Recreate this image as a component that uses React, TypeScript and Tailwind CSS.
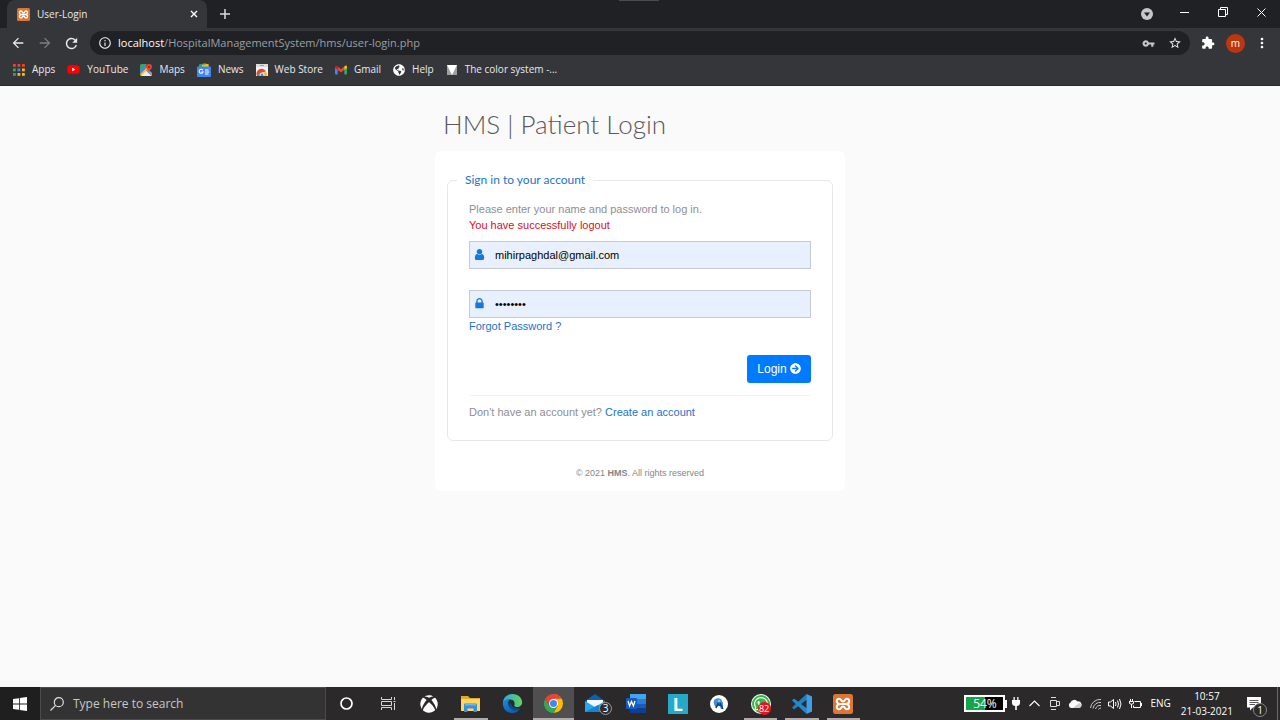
import { useState } from "react";
import type { ReactNode } from "react";
import { FaArrowCircleRight, FaGlobeAmericas, FaWhatsapp, FaXbox, FaYoutube } from "react-icons/fa";
import { MdExtension, MdInfoOutline, MdVpnKey, MdRefresh, MdStarBorder, MdArrowBack, MdArrowForward, MdMoreVert } from "react-icons/md";

const TILES = ["#ea4335", "#ea4335", "#ea4335", "#34a853", "#4285f4", "#fbbc05", "#34a853", "#fbbc05", "#fbbc05"];

function XamppIcon({ size }: { size: number }) {
  return (
    <svg width={size} height={size} viewBox="0 0 20 20">
      <rect width="20" height="20" rx="2.5" fill="#df7532" />
      <path
        d="M7.6 10H12.4M7.6 10C5 10 3.8 8.800 3.800 7.200C3.800 5.600 4.900 4.700 6.200 4.700C8.600 4.700 7.700 7.500 10 7.500C12.300 7.500 11.400 4.700 13.800 4.700C15.100 4.700 16.200 5.600 16.200 7.200C16.200 8.800 15 10 12.400 10C15 10 16.200 11.200 16.200 12.800C16.200 14.400 15.100 15.300 13.800 15.300C11.400 15.300 12.300 12.500 10 12.500C7.700 12.500 8.600 15.300 6.200 15.300C4.900 15.300 3.800 14.400 3.800 12.800C3.800 11.200 5 10 7.600 10Z"
        fill="none" stroke="#fff" strokeWidth="2.1" strokeLinejoin="round"
      />
    </svg>
  );
}

function AppsIcon() {
  return (
    <svg width="12" height="12" viewBox="0 0 12 12">
      {TILES.map((c, i) => (
        <rect key={i} x={(i % 3) * 4.5} y={Math.floor(i / 3) * 4.5} width="2.8" height="2.8" fill={c} />
      ))}
    </svg>
  );
}

function MapsIcon() {
  return (
    <svg width="12" height="12" viewBox="0 0 12 12">
      <path d="M0 1.500Q0 0 1.500 0H7L0 7Z" fill="#34a853" />
      <path d="M0 6L5 1L7 3L0 10Z" fill="#4285f4" />
      <path d="M0 10L6.500 3.500L8 5L1.500 12Q0 12 0 10Z" fill="#fbbc05" />
      <path d="M1 12L6 6.500L12 12Z" fill="#e8eaed" />
      <path d="M6 6.500L8 5L12 9V12Z" fill="#9aa0a6" />
      <path d="M9 0A3 3 0 0 1 12 3C12 5 9.400 6 9 8.500C8.600 6 6 5 6 3A3 3 0 0 1 9 0Z" fill="#ea4335" />
      <circle cx="9" cy="3" r="1" fill="#8c1d18" />
    </svg>
  );
}

function NewsIcon() {
  return (
    <svg width="14" height="14" viewBox="0 0 14 14">
      <path d="M2 1.500L9 0L10 5H2Z" fill="#34a853" />
      <path d="M5 2L11.500 .8L12 5H5Z" fill="#fbbc05" />
      <rect y="3.500" width="14" height="10.500" rx="1" fill="#4285f4" />
      <path d="M5.800 7.200A2 2 0 1 0 6 9H4.500M8 7H11.500M8 9H12M8 11H11.500" fill="none" stroke="#fff" strokeWidth="1.100" />
    </svg>
  );
}

function WebStoreIcon() {
  return (
    <svg width="12" height="12" viewBox="0 0 12 12">
      <path d="M0 0H12V12H0Z" fill="#f1f3f4" />
      <path d="M0 0H12V3H0Z" fill="#dadce0" />
      <path d="M4 1.500H8" stroke="#9aa0a6" />
      <path d="M1 12A5 5 0 0 1 10 7.500L6 8.500Z" fill="#ea4335" />
      <path d="M9 7A5 5 0 0 1 11 12H7Z" fill="#fbbc05" />
      <path d="M1 12A5 5 0 0 1 2 8.500L5 12Z" fill="#34a853" />
      <circle cx="6" cy="11" r="2" fill="#4285f4" stroke="#fff" strokeWidth=".8" />
    </svg>
  );
}

function GmailIcon() {
  return (
    <svg width="12" height="10" viewBox="0 0 12 10">
      <path d="M0 2H2.700V9.500H1Q0 9.500 0 8.500Z" fill="#4285f4" />
      <path d="M9.300 2H12V8.500Q12 9.500 11 9.500H9.300Z" fill="#34a853" />
      <path d="M2.700 1.500L6 4L9.300 1.500V5L6 7.500L2.700 5Z" fill="#ea4335" />
      <path d="M0 2Q0 0 2 .8L2.700 1.500V5L0 3Z" fill="#c5221f" />
      <path d="M12 2Q12 0 10 .8L9.300 1.500V5L12 3Z" fill="#fbbc04" />
    </svg>
  );
}

function ColorSystemIcon() {
  return (
    <svg width="12" height="12" viewBox="0 0 12 12">
      <rect x="1" y="1" width="10" height="10" fill="#9aa0a6" />
      <path d="M1 1H11L6 11Z" fill="#fff" />
    </svg>
  );
}

const bookmarks: { label: string; icon: ReactNode }[] = [
  { label: "Apps", icon: <AppsIcon /> },
  { label: "YouTube", icon: <span className="relative flex"><span className="absolute inset-x-1 inset-y-1 bg-white" /><FaYoutube size={13} className="relative text-[#f00]" /></span> },
  { label: "Maps", icon: <MapsIcon /> },
  { label: "News", icon: <NewsIcon /> },
  { label: "Web Store", icon: <WebStoreIcon /> },
  { label: "Gmail", icon: <GmailIcon /> },
  { label: "Help", icon: <FaGlobeAmericas size={12} className="text-white" /> },
  { label: "The color system -...", icon: <ColorSystemIcon /> },
];

function BrowserChrome() {
  return (
    <header className="bg-[#35363a] text-[#e8eaed] font-['Open_Sans',sans-serif] border-b border-[#292a2d]">
      <div className="relative h-7 bg-[#202124] flex items-center pl-[7px] pr-[10px]">
        <span className="absolute top-0 left-[619px] w-10 h-px bg-[#4a4b4f]" />
        <div className="w-[200px] h-full rounded-t-lg bg-[#35363a] flex items-center pl-[10px] pr-[5px] text-[10px]">
          <XamppIcon size={13} />
          <span className="ml-[7px] flex-1">User-Login</span>
          <button aria-label="Close tab" className="p-1">
            <svg width="8" height="8" viewBox="0 0 8 8" stroke="#fff" strokeWidth="1.400"><path d="M1 1L7 7M7 1L1 7" /></svg>
          </button>
        </div>
        <button aria-label="New tab" className="ml-[13px]">
          <svg width="10" height="10" viewBox="0 0 10 10" stroke="#dadce0" strokeWidth="1.500"><path d="M5 0V10M0 5H10" /></svg>
        </button>
        <div className="ml-auto flex items-center">
          <button aria-label="Tab search" className="mr-[27px]">
            <svg width="12" height="12" viewBox="0 0 12 12"><circle cx="6" cy="6" r="6" fill="#c4c7cb" /><path d="M3 4.500H9L6 8.500Z" fill="#202124" /></svg>
          </button>
          <button aria-label="Minimize" className="mr-7 mb-1">
            <svg width="10" height="10" viewBox="0 0 10 10" stroke="#fff"><path d="M0 5.500H9" /></svg>
          </button>
          <button aria-label="Restore" className="mr-[29px] mb-1">
            <svg width="10" height="10" viewBox="0 0 10 10" fill="none" stroke="#fff"><path d="M.5 2.500H7.500V9.500H.5ZM2.500 2.500V.5H9.500V7.500H7.500" /></svg>
          </button>
          <button aria-label="Close" className="mr-1 mb-1">
            <svg width="9" height="9" viewBox="0 0 9 9" stroke="#fff"><path d="M.5 .5L8.500 8.500M8.500 .5L.5 8.500" /></svg>
          </button>
        </div>
      </div>

      <div className="h-[30px] flex items-center pl-[10px] pr-[10px]">
        <button aria-label="Back"><MdArrowBack size={16} /></button>
        <button aria-label="Forward" className="ml-[11px] text-[#7d7e82]"><MdArrowForward size={16} /></button>
        <button aria-label="Reload" className="ml-[10px]"><MdRefresh size={17} /></button>
        <div className="ml-[10px] h-6 flex-1 rounded-full bg-[#202124] flex items-center pl-2 pr-2">
          <MdInfoOutline size={14} />
          <div role="textbox" aria-label="Address" className="ml-[6px] flex-1 text-[11px] text-[#9aa0a6]">
            <span className="text-white">localhost</span>/HospitalManagementSystem/hms/user-login.php
          </div>
          <button aria-label="Saved passwords" className="mr-[13px]"><MdVpnKey size={13} className="text-[#c4c7cb]" /></button>
          <button aria-label="Bookmark"><MdStarBorder size={14} /></button>
        </div>
        <button aria-label="Extensions" className="ml-[11px]"><MdExtension size={14} className="text-white" /></button>
        <button className="ml-[11px] size-[19px] rounded-full bg-[#bf360c] text-[10px] leading-none text-white">m</button>
        <button aria-label="Menu" className="ml-[9px]"><MdMoreVert size={16} className="text-white" /></button>
      </div>

      <nav className="h-[27px] flex items-center gap-3 pl-[13px] pb-1 text-[10px]">
        {bookmarks.map(b => (
          <a key={b.label} href="#" className="flex items-center gap-[7px]">
            {b.icon}
            {b.label}
          </a>
        ))}
      </nav>
    </header>
  );
}

function LoginCard() {
  const [email, setEmail] = useState("mihirpaghdal@gmail.com");
  const [password, setPassword] = useState("password");

  return (
    <div className="w-full max-w-[410px] mx-auto font-['Liberation_Sans',Arial,sans-serif]">
      <h1 className="pl-2 mb-[11px] font-['Lato',sans-serif] font-light text-[26px] leading-8 text-[#58585b]">HMS | Patient Login</h1>
      <div className="bg-white rounded-md px-3 pt-[19px] pb-[10px]">
        <form onSubmit={e => e.preventDefault()}>
          <fieldset className="border border-[#e6e8e8] rounded-md px-[21px] pb-5 text-[11px] leading-4 text-[#8e8e93]">
            <legend className="-ml-3 px-2 font-['Lato',sans-serif] text-[12px] leading-5 text-[#1a73d1]">Sign in to your account</legend>
            <p className="mt-[11px]">
              Please enter your name and password to log in.<br />
              <span className="text-[#d8101c]">You have successfully logout</span>
            </p>
            <div className="relative mt-2">
              <input id="email" type="email" value={email} onChange={e => setEmail(e.target.value)}
                className="block w-full h-7 border border-[#c5cad6] bg-[#e8f0fe] pl-[25px] pr-2 text-[11px] text-black outline-none" />
              <label htmlFor="email" aria-label="Email" className="absolute left-1 top-[7px]">
                <svg viewBox="0 0 1792 1792" className="size-[13px] fill-[#1277e0]">
                  <path d="M1536 1399q0 109-62.500 187t-150.500 78h-854q-88 0-150.500-78t-62.500-187q0-85 8.500-160.500t31.500-152 58.500-131 94-89 134.500-34.500q131 128 313 128t313-128q76 0 134.500 34.500t94 89 58.500 131 31.500 152 8.500 160.500zm-256-887q0 159-112.500 271.500t-271.500 112.500-271.500-112.500-112.500-271.500 112.500-271.500 271.500-112.500 271.500 112.500 112.500 271.500z" />
                </svg>
              </label>
            </div>
            <div className="relative mt-[21px]">
              <input id="password" type="password" value={password} onChange={e => setPassword(e.target.value)}
                className="block w-full h-7 border border-[#c5cad6] bg-[#e8f0fe] pl-[25px] pr-2 text-[11px] text-black outline-none" />
              <label htmlFor="password" aria-label="Password" className="absolute left-1 top-[7px]">
                <svg viewBox="0 0 1792 1792" className="size-[13px] fill-[#1277e0]">
                  <path d="M640 768h512v-192q0-106-75-181t-181-75-181 75-75 181v192zm832 96v576q0 40-28 68t-68 28h-960q-40 0-68-28t-28-68v-576q0-40 28-68t68-28h32v-192q0-184 132-316t316-132 316 132 132 316v192h32q40 0 68 28t28 68z" />
                </svg>
              </label>
            </div>
            <a href="#" className="block w-fit text-[#1a73d1]">Forgot Password ?</a>
            <div className="mt-[21px] flex justify-end">
              <button type="submit" className="h-7 w-16 rounded-[3px] bg-[#007aff] pb-px text-white text-[12px] flex items-center justify-center gap-[3px]">
                Login <FaArrowCircleRight size={11} />
              </button>
            </div>
            <div className="mt-3 border-t border-[#f3f3f3] pt-2">
              Don't have an account yet? <a href="#" className="text-[#1a73d1]">Create an account</a>
            </div>
          </fieldset>
        </form>
        <p className="mt-6 text-center text-[9px] leading-4 text-[#858585]">
          © 2021 <span className="font-bold">HMS</span>. All rights reserved
        </p>
      </div>
    </div>
  );
}

function EdgeIcon() {
  return (
    <svg width="21" height="21" viewBox="0 0 24 24">
      <defs>
        <linearGradient id="edgeTop" x1="0" y1="0" x2="1" y2="0"><stop offset="0" stopColor="#2aa7e8" /><stop offset="1" stopColor="#5fd65a" /></linearGradient>
        <linearGradient id="edgeLow" x1="0" y1="0" x2="1" y2="1"><stop offset="0" stopColor="#1b8be0" /><stop offset="1" stopColor="#0c4fa0" /></linearGradient>
      </defs>
      <path d="M1 12C1 5 6 1 12 1C18.500 1 23 5.500 23 10.500C23 14 20.500 16 17.500 16C15 16 13.800 15 14 14C15 12 14.500 8 10 7.500C5 7 1.500 9.500 1 12Z" fill="url(#edgeTop)" />
      <path d="M1 12C1.500 9 5 7 9 7.300C6.500 9 6.500 13 8.500 16C11 19.500 16 20.500 21 17.500C19 21 16 23 12 23C6 23 1 18.500 1 12Z" fill="url(#edgeLow)" />
      <path d="M9.500 10.500C7.500 13 8.500 17 12 19C15.500 20.500 19 19 21 17.500C17 18.500 11 17 9.500 10.500Z" fill="#124b8d" />
    </svg>
  );
}

function ChromeIcon() {
  return (
    <svg width="19" height="19" viewBox="0 0 20 20">
      <path d="M10 10V0A10 10 0 0 1 10 20L14.300 12.500Z" fill="#fbbc05" />
      <path d="M10 10L14.300 12.500L10 20A10 10 0 0 1 1.340 5L5.700 12.500Z" fill="#34a853" />
      <path d="M1.340 5A10 10 0 0 1 18.660 5H10V10L5.700 12.500Z" fill="#ea4335" />
      <circle cx="10" cy="10" r="4.700" fill="#fff" />
      <circle cx="10" cy="10" r="3.700" fill="#4285f4" />
    </svg>
  );
}

function MailIcon() {
  return (
    <span className="relative">
      <svg width="20" height="19" viewBox="0 0 20 19">
        <path d="M0 7L10 0L20 7V18H0Z" fill="#0f5fb0" />
        <path d="M2 6H18V12L10 14L2 12Z" fill="#f3f8fd" />
        <path d="M0 7L10 13L20 7V18H0Z" fill="#28a8ea" />
        <path d="M0 18L13 11L20 18Z" fill="#1583d2" />
      </svg>
      <span className="absolute left-[14px] top-2 size-[13px] rounded-full border border-[#9a9a9a] bg-[#2d2d2d] text-[10px] leading-[11px] text-center text-white">3</span>
    </span>
  );
}

function WhatsAppIcon() {
  return (
    <span className="relative">
      <span className="flex size-5 items-center justify-center rounded-full bg-white">
        <span className="flex size-[18px] items-center justify-center rounded-full bg-[#2fb843]"><FaWhatsapp size={16} className="text-white" /></span>
      </span>
      <span className="absolute left-[7px] top-2 size-[13px] rounded-full bg-[#e5151f] text-[9px] leading-[13px] text-white flex justify-center">82</span>
    </span>
  );
}

const taskbar: { name: string; icon: ReactNode; open?: boolean; active?: boolean }[] = [
  { name: "Cortana", icon: <svg width="13" height="13" viewBox="0 0 13 13"><circle cx="6.500" cy="6.500" r="5.500" fill="none" stroke="#fff" strokeWidth="1.700" /></svg> },
  { name: "Task View", icon: <svg width="15" height="13" viewBox="0 0 15 13" fill="none" stroke="#d8d8d8"><path d="M.5 0V2.500H10.500V0M.5 13V10.500H10.500V13M.5 4.500H10.500V8.500H.5ZM13.500 0V3M13.500 6V13M12.500 4.500H14.500" /></svg> },
  { name: "Xbox", icon: <FaXbox size={18} className="text-white" /> },
  {
    name: "File Explorer", open: true,
    icon: <svg width="19" height="17" viewBox="0 0 19 17"><path d="M0 1H7L9 3H19V16H0Z" fill="#e8a727" /><path d="M0 4H19V16H0Z" fill="#ffd75e" /><path d="M3 9.500Q3 8.500 4 8.500H15Q16 8.500 16 9.500V17H12.500V13.500H6.500V17H3Z" fill="#3f8fd6" /><path d="M4 8.500H15V10.500H4Z" fill="#6ab7ee" /></svg>,
  },
  { name: "Edge", icon: <EdgeIcon /> },
  { name: "Chrome", icon: <ChromeIcon />, open: true, active: true },
  { name: "Mail", icon: <MailIcon /> },
  {
    name: "Word",
    icon: <svg width="20" height="19" viewBox="0 0 20 19"><rect x="4" width="16" height="19" rx="1" fill="#2b7cd3" /><path d="M4 0H20V5H4Z" fill="#41a5ee" /><path d="M4 10H20V14H4Z" fill="#185abd" /><path d="M4 14H20V19H4Z" fill="#103f91" /><rect y="4" width="11" height="11" rx="1" fill="#185abd" /><path d="M2 7L3.600 12L5.500 7.500L7.400 12L9 7" fill="none" stroke="#fff" strokeWidth="1.300" /></svg>,
  },
  { name: "L", icon: <span className="flex size-5 items-center justify-center bg-[#25a9c9] text-[18px] font-bold leading-none text-white">L</span> },
  {
    name: "Android Studio",
    icon: <svg width="18" height="18" viewBox="0 0 18 18"><circle cx="9" cy="9" r="9" fill="#fff" /><path d="M4 5Q7 2 11 4L13 8V14H11L9 10L6 13Q3 9 4 5Z" fill="#3e8ee0" /><path d="M9 6L6 13M9 6L13 14M7.500 10H11" fill="none" stroke="#123d75" strokeWidth="1.400" /><circle cx="9" cy="6" r="1.500" fill="#7fc4f5" /></svg>,
  },
  { name: "WhatsApp", icon: <WhatsAppIcon />, open: true },
  {
    name: "VS Code", open: true,
    icon: <svg width="20" height="20" viewBox="0 0 20 20"><path d="M14.500 0L15 5.500L2 15.500L0 13.500Z" fill="#1f80c4" /><path d="M14.500 20L15 14.500L2 4.500L0 6.500Z" fill="#2489ca" /><path d="M14.500 0L20 2.500V17.500L14.500 20Z" fill="#3c9fe8" /></svg>,
  },
  { name: "XAMPP", icon: <XamppIcon size={20} />, open: true },
];

function TrayIcons() {
  return (
    <div className="flex items-center">
      <div className="relative flex h-[17px] w-[41px] items-center justify-center border-2 border-white bg-black text-[12px] leading-none">
        <span className="absolute inset-y-0 left-0 w-1/2 bg-[#16a34a]" />
        <span className="relative">54%</span>
      </div>
      <span className="h-2 w-[2px] bg-white" />
      <svg className="ml-[5px]" width="8" height="13" viewBox="0 0 8 13" fill="#fff"><path d="M1.500 0H2.800V3H5.200V0H6.500V3H8V6Q8 8.500 4.800 9V13H3.200V9Q0 8.500 0 6V3H1.500Z" /></svg>
      <svg className="ml-[9px]" width="11" height="7" viewBox="0 0 11 7" fill="none" stroke="#fff" strokeWidth="1.100"><path d="M.5 6L5.500 1L10.500 6" /></svg>
      <svg className="ml-[10px]" width="10" height="13" viewBox="0 0 10 13" fill="none" stroke="#ddd"><path d="M1 .5H6M.5 3.500H6.500V9.500H.5ZM6.500 4.500H9.500V8.500H6.500M1 12.500H6" /></svg>
      <svg className="ml-[8px]" width="14" height="9" viewBox="0 0 14 9"><path d="M3 9A3 3 0 0 1 2.500 3.500A4 4 0 0 1 9.500 2.500A3.300 3.300 0 0 1 11 9Z" fill="#fff" /><path d="M5 9L11 4A2.600 2.600 0 0 1 11.500 9Z" fill="#ccc" /></svg>
      <svg className="ml-[8px]" width="12" height="12" viewBox="0 0 12 12" fill="none" stroke="#ccc"><path d="M.5 10A9.500 9.500 0 0 1 11 1.500M3 10.500A7 7 0 0 1 11 4.500M5.500 11A5 5 0 0 1 11 7.500M8.500 11.500A2.500 2.500 0 0 1 11 10" /></svg>
      <svg className="ml-[6px]" width="14" height="12" viewBox="0 0 14 12" fill="none" stroke="#fff"><path d="M.5 4V8H2.500L5.500 10.500V1.500L2.500 4ZM7.500 4Q8.500 6 7.500 8M9.500 2.500Q11.500 6 9.500 9.500M11.500 1Q14.500 6 11.500 11" /></svg>
      <svg className="ml-[7px]" width="13" height="10" viewBox="0 0 13 10" fill="none" stroke="#fff"><path d="M4.500 6.500V8.500H11.500V2.500H5.500M12.500 4V7M0 2.500H4.500V4.500Q2.500 6 .5 4.500V2.500M1.500 0V2M3.500 0V2M2.500 5V9" /></svg>
    </div>
  );
}

function Taskbar() {
  return (
    <footer className="h-[33px] flex bg-[#2b2929] text-white font-['Open_Sans',sans-serif]">
      <button aria-label="Start" className="w-10 bg-[#1f1f1f] flex items-center justify-center">
        <svg width="14" height="14" viewBox="0 0 14 14" fill="#fff"><path d="M0 2L6 1.200V6.600H0ZM6.800 1L14 0V6.600H6.800ZM0 7.400H6V12.800L0 12ZM6.800 7.400H14V14L6.800 13Z" /></svg>
      </button>
      <div className="w-[286px] border border-[#4b4b4b] bg-[#333] flex items-center pl-[9px]">
        <svg width="14" height="14" viewBox="0 0 14 14" fill="none" stroke="#e0e0e0" strokeWidth="1.200"><circle cx="8.800" cy="5.200" r="4.500" /><path d="M5.600 8.400L.5 13.500" /></svg>
        <input aria-label="Search" placeholder="Type here to search" className="ml-[9px] flex-1 bg-transparent text-[12px] placeholder-[#c8c8c8] outline-none" />
      </div>
      <div className="w-[538px] grid grid-cols-13">
        {taskbar.map(t => (
          <button key={t.name} aria-label={t.name} className={`relative flex items-center justify-center ${t.active ? "bg-[#4f4f4f]" : ""}`}>
            {t.icon}
            {t.open && <span className={`absolute bottom-0 h-[2px] bg-[#b3abab] ${t.active ? "inset-x-0" : "inset-x-1"}`} />}
          </button>
        ))}
      </div>
      <div className="ml-auto flex items-center">
        <TrayIcons />
        <span className="ml-[8px] text-[10px]">ENG</span>
        <div className="ml-[10px] text-center text-[10px] leading-[15px]">
          <div>10:57</div>
          <div>21-03-2021</div>
        </div>
        <button aria-label="Notifications" className="relative ml-[14px]">
          <svg width="14" height="14" viewBox="0 0 14 14"><path d="M0 0H14V10.500H6L3 13.500V10.500H0Z" fill="#fff" /><path d="M2.500 3.500H11.500M2.500 5.500H11.500M2.500 7.500H8" stroke="#2b2929" strokeWidth=".8" /></svg>
          <span className="absolute left-[6px] top-[6px] size-[14px] rounded-full border border-[#8a8a8a] bg-[#2b2929] text-[10px] leading-3 text-center">1</span>
        </button>
        <span className="ml-4 mr-[2px] h-[33px] w-px bg-[#6b6b6b]" />
      </div>
    </footer>
  );
}

export default function App() {
  return (
    <div className="min-h-screen flex flex-col bg-[#fafafa]">
      <BrowserChrome />
      <main className="flex-1 pt-[22px]">
        <LoginCard />
      </main>
      <Taskbar />
    </div>
  );
}
